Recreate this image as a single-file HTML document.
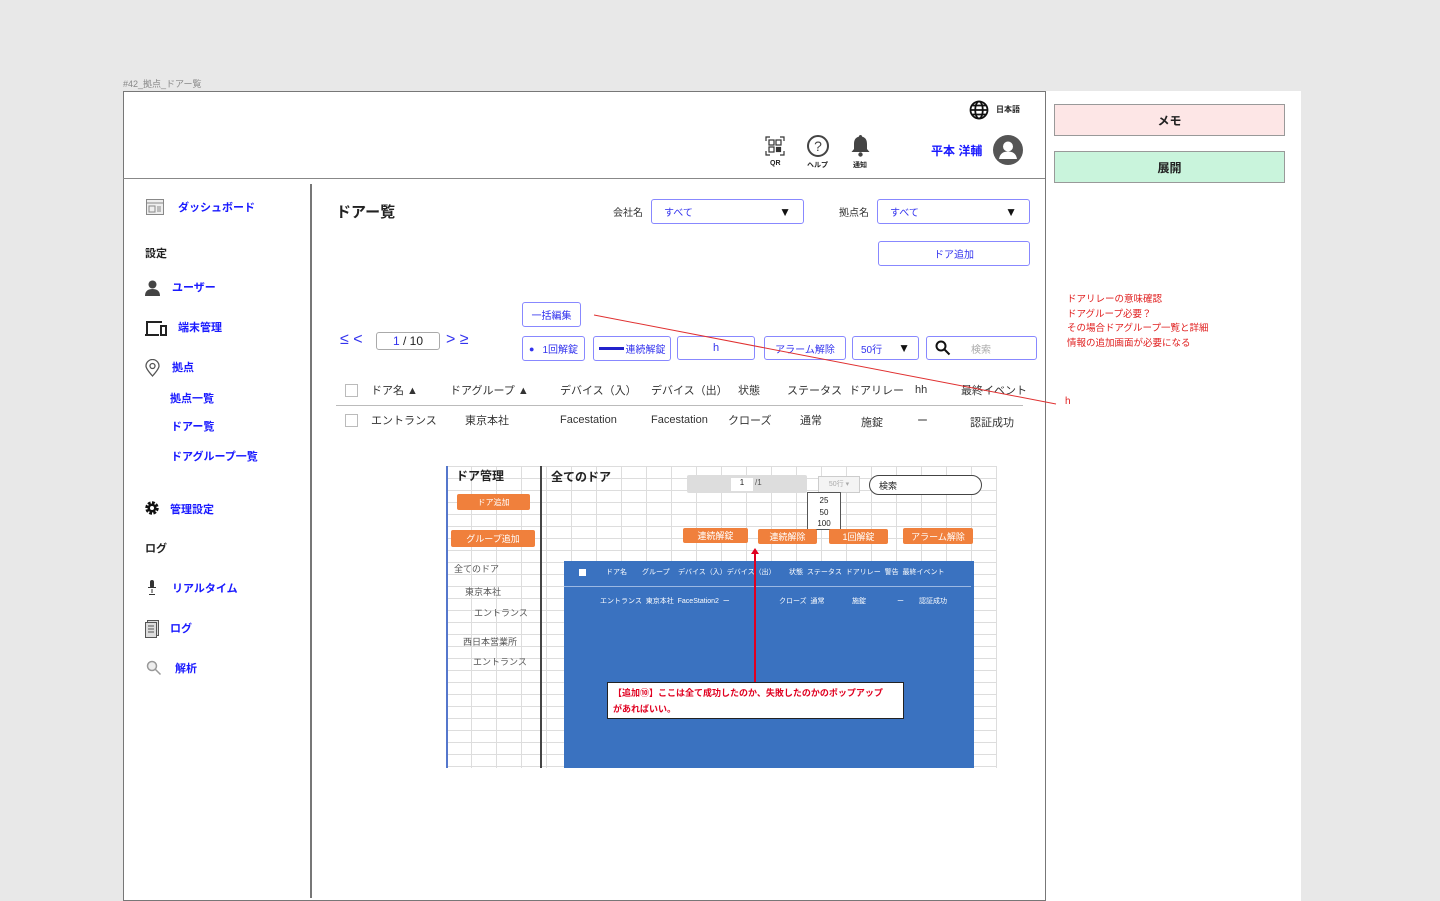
<!DOCTYPE html>
<html><head><meta charset="utf-8">
<style>
*{margin:0;padding:0;box-sizing:border-box}
body{width:1440px;height:898px;background:#e8e8e8;position:relative;overflow:hidden;font-family:"Liberation Sans","Noto Sans CJK JP",sans-serif;color:#222}
.a{position:absolute;white-space:nowrap}
.nav{font-size:11px;font-weight:bold;color:#1a1aff}
.btn{position:absolute;border:1.5px solid #8888ff;border-radius:3px;background:#fff;font-size:11px;color:#3333ee;display:flex;align-items:center;justify-content:center}
.th{position:absolute;top:382px;font-size:11px;color:#333}
.td{position:absolute;top:412px;font-size:11px;color:#333}
.ob{position:absolute;background:#f0803c;color:#fff;font-size:9px;display:flex;align-items:center;justify-content:center;border-radius:2px}
.grid{background-color:#fff;background-image:linear-gradient(#ddd 1px,transparent 1px),linear-gradient(90deg,#ddd 1px,transparent 1px);background-size:25px 12px}
.bt{position:absolute;font-size:7px;color:#fff}
.st{position:absolute;font-size:9px;color:#555}
</style></head><body>
<div class="a" style="left:123px;top:77px;font-size:9px;color:#888">#42_拠点_ドアー覧</div>
<div class="a" style="left:123px;top:91px;width:923px;height:810px;background:#fff;border:1px solid #777"></div>
<div class="a" style="left:1046px;top:91px;width:255px;height:810px;background:#fff"></div>
<div class="a" style="left:123px;top:178px;width:922px;height:1px;background:#888"></div>
<div class="a" style="left:310px;top:184px;width:1.5px;height:714px;background:#777"></div>

<svg class="a" style="left:969px;top:100px" width="20" height="20" viewBox="0 0 20 20" fill="none" stroke="#111" stroke-width="1.8"><circle cx="10" cy="10" r="8.5"/><ellipse cx="10" cy="10" rx="3.8" ry="8.5"/><path d="M1.5 10h17M3 5.5h14M3 14.5h14"/></svg>
<div class="a" style="left:996px;top:104px;font-size:8px;font-weight:bold">日本語</div>
<svg class="a" style="left:765px;top:136px" width="20" height="20" viewBox="0 0 20 20" fill="none" stroke="#333" stroke-width="1.2"><rect x="4" y="4" width="5" height="5"/><rect x="11" y="4" width="5" height="5"/><rect x="4" y="11" width="5" height="5"/><rect x="11.5" y="11.5" width="4" height="4" fill="#333"/><path d="M1 5V1h4M15 1h4v4M1 15v4h4M15 19h4v-4"/></svg>
<div class="a" style="left:770px;top:160px;font-size:7px;font-weight:bold">QR</div>
<svg class="a" style="left:806px;top:134px" width="24" height="24" viewBox="0 0 24 24"><circle cx="12" cy="12" r="10" fill="none" stroke="#444" stroke-width="2"/><text x="12" y="17" font-size="14" text-anchor="middle" fill="#444" font-family="Liberation Sans">?</text></svg>
<div class="a" style="left:807px;top:160px;font-size:7px;font-weight:bold">ヘルプ</div>
<svg class="a" style="left:850px;top:134px" width="21" height="24" viewBox="0 0 21 24"><path d="M10.5 1c-1 0-1.6.7-1.6 1.6C5.5 3.5 4 6 4 10v5l-2.5 3h18L17 15v-5c0-4-1.5-6.5-4.9-7.4 0-.9-.6-1.6-1.6-1.6z" fill="#444"/><circle cx="10.5" cy="20.5" r="2.2" fill="#444"/></svg>
<div class="a" style="left:853px;top:160px;font-size:7px;font-weight:bold">通知</div>
<div class="a" style="left:931px;top:142px;font-size:12px;font-weight:bold;color:#1a1aff">平本 洋輔</div>
<svg class="a" style="left:993px;top:135px" width="30" height="30" viewBox="0 0 30 30"><circle cx="15" cy="15" r="15" fill="#555"/><circle cx="15" cy="11.5" r="5" fill="#fff"/><path d="M6 24c1-6 5-7.5 9-7.5s8 1.5 9 7.5z" fill="#fff"/></svg>

<div class="a" style="left:1054px;top:104px;width:231px;height:32px;background:#fde6e6;border:1px solid #999;font-size:12px;font-weight:bold;display:flex;align-items:center;justify-content:center">メモ</div>
<div class="a" style="left:1054px;top:151px;width:231px;height:32px;background:#c9f4dc;border:1px solid #999;font-size:12px;font-weight:bold;display:flex;align-items:center;justify-content:center">展開</div>
<div class="a" style="left:1067px;top:293px;font-size:9.5px;color:#e02020;line-height:14.5px">ドアリレーの意味確認<br>ドアグループ必要？<br>その場合ドアグループ一覧と詳細<br>情報の追加画面が必要になる</div>
<div class="a" style="left:1065px;top:396px;font-size:10px;color:#e02020">h</div>

<svg class="a" style="left:146px;top:199px" width="18" height="16" viewBox="0 0 18 16" fill="#eee" stroke="#888"><rect x=".5" y=".5" width="17" height="15"/><path d="M.5 4h17M3 7h6v6H3zM11 8h4M11 10h4M11 12h4" fill="none"/></svg>
<div class="a nav" style="left:178px;top:199px">ダッシュボード</div>
<div class="a" style="left:145px;top:245px;font-size:11px;font-weight:bold">設定</div>
<svg class="a" style="left:145px;top:280px" width="15" height="16" viewBox="0 0 15 16" fill="#444"><circle cx="7.5" cy="4.5" r="4"/><path d="M0 16c0-5 3-7 7.5-7s7.5 2 7.5 7z"/></svg>
<div class="a nav" style="left:172px;top:279px">ユーザー</div>
<svg class="a" style="left:145px;top:320px" width="23" height="16" viewBox="0 0 23 16" fill="none" stroke="#222" stroke-width="2"><path d="M2 15V2h15M0 15h14"/><rect x="16" y="6" width="5" height="9"/></svg>
<div class="a nav" style="left:178px;top:319px">端末管理</div>
<svg class="a" style="left:145px;top:359px" width="15" height="18" viewBox="0 0 15 18" fill="none" stroke="#555" stroke-width="1.3"><path d="M7.5 17C3 12 1 9 1 7a6.5 6.5 0 0113 0c0 2-2 5-6.5 10z"/><circle cx="7.5" cy="7" r="2.5"/></svg>
<div class="a nav" style="left:172px;top:359px">拠点</div>
<div class="a nav" style="left:170px;top:390px">拠点一覧</div>
<div class="a nav" style="left:171px;top:418px">ドアー覧</div>
<div class="a nav" style="left:171px;top:448px">ドアグループ一覧</div>
<svg class="a" style="left:144px;top:500px" width="16" height="16" viewBox="0 0 16 16"><circle cx="8" cy="8" r="5" fill="none" stroke="#111" stroke-width="3.5" stroke-dasharray="2.6 1.3"/><circle cx="8" cy="8" r="4.5" fill="#111"/><circle cx="8" cy="8" r="2" fill="#fff"/></svg>
<div class="a nav" style="left:170px;top:501px">管理設定</div>
<div class="a" style="left:145px;top:540px;font-size:11px;font-weight:bold">ログ</div>
<svg class="a" style="left:147px;top:580px" width="10" height="16" viewBox="0 0 10 16" fill="#333"><rect x="3" y="0" width="4" height="8" rx="2"/><path d="M1 7h8v1H1zM4.5 9h1v4h-1zM2 14h6v1H2z"/></svg>
<div class="a nav" style="left:172px;top:580px">リアルタイム</div>
<svg class="a" style="left:145px;top:620px" width="14" height="18" viewBox="0 0 14 18" fill="#ddd" stroke="#555"><rect x="2.5" y=".5" width="11" height="15"/><rect x=".5" y="2.5" width="11" height="15"/><path d="M3 6h6M3 9h6M3 12h6" stroke="#555"/></svg>
<div class="a nav" style="left:170px;top:620px">ログ</div>
<svg class="a" style="left:146px;top:660px" width="16" height="16" viewBox="0 0 16 16" fill="none" stroke="#999" stroke-width="1.5"><circle cx="6" cy="6" r="4.5" fill="#eee"/><path d="M9.5 9.5l5 5"/></svg>
<div class="a nav" style="left:175px;top:660px">解析</div>

<div class="a" style="left:336px;top:201px;font-size:15px;font-weight:bold">ドアー覧</div>
<div class="a" style="left:613px;top:204px;font-size:10px;color:#333">会社名</div>
<div class="btn" style="left:651px;top:199px;width:153px;height:25px;justify-content:space-between;padding:0 12px"><span style="font-size:10px">すべて</span><span style="color:#111;font-size:12px">▼</span></div>
<div class="a" style="left:839px;top:204px;font-size:10px;color:#333">拠点名</div>
<div class="btn" style="left:877px;top:199px;width:153px;height:25px;justify-content:space-between;padding:0 12px"><span style="font-size:10px">すべて</span><span style="color:#111;font-size:12px">▼</span></div>
<div class="btn" style="left:878px;top:241px;width:152px;height:25px;font-size:10px">ドア追加</div>

<div class="btn" style="left:522px;top:302px;width:59px;height:25px;font-size:10px">一括編集</div>
<div class="a" style="left:340px;top:331px;font-size:16px;color:#3333ee">≤ &lt;</div>
<div class="a" style="left:376px;top:332px;width:64px;height:18px;border:1px solid #aaa;border-radius:3px;font-size:12px;text-align:center;line-height:17px"><span style="color:#3333ee">1</span> / 10</div>
<div class="a" style="left:446px;top:331px;font-size:16px;color:#3333ee">&gt; ≥</div>
<div class="btn" style="left:522px;top:336px;width:63px;height:25px;font-size:10px"><span style="font-size:9px;margin-right:8px">●</span>1回解錠</div>
<div class="btn" style="left:593px;top:336px;width:78px;height:25px;font-size:10px"><span style="display:inline-block;width:25px;height:3px;background:#22c;margin-right:2px"></span>連続解錠</div>
<div class="btn" style="left:677px;top:336px;width:78px;height:24px">h</div>
<div class="btn" style="left:764px;top:336px;width:82px;height:24px;font-size:10px">アラーム解除</div>
<div class="btn" style="left:852px;top:336px;width:67px;height:24px;justify-content:space-between;padding:0 8px;font-size:10px"><span>50行</span><span style="color:#111;font-size:12px">▼</span></div>
<div class="btn" style="left:926px;top:336px;width:111px;height:24px;justify-content:flex-start;padding-left:8px"><svg width="16" height="16" viewBox="0 0 16 16" fill="none" stroke="#111" stroke-width="2"><circle cx="6" cy="6" r="4.5"/><path d="M9.5 9.5l5 5"/></svg><span style="color:#aaa;font-size:10px;margin-left:20px">検索</span></div>

<div class="a" style="left:345px;top:384px;width:13px;height:13px;border:1px solid #bbb"></div>
<div class="th" style="left:371px">ドア名 ▲</div>
<div class="th" style="left:450px">ドアグループ ▲</div>
<div class="th" style="left:560px">デバイス（入）</div>
<div class="th" style="left:651px">デバイス（出）</div>
<div class="th" style="left:738px">状態</div>
<div class="th" style="left:787px">ステータス</div>
<div class="th" style="left:849px">ドアリレー</div>
<div class="th" style="left:915px;top:384px">hh</div>
<div class="th" style="left:961px">最終イベント</div>
<div class="a" style="left:336px;top:405px;width:687px;height:1px;background:#bbb"></div>
<div class="a" style="left:345px;top:414px;width:13px;height:13px;border:1px solid #bbb"></div>
<div class="td" style="left:371px">エントランス</div>
<div class="td" style="left:465px">東京本社</div>
<div class="td" style="left:560px;top:414px">Facestation</div>
<div class="td" style="left:651px;top:414px">Facestation</div>
<div class="td" style="left:728px">クローズ</div>
<div class="td" style="left:800px">通常</div>
<div class="td" style="left:861px;top:414px">施錠</div>
<div class="td" style="left:917px">ー</div>
<div class="td" style="left:970px;top:414px">認証成功</div>

<div class="a grid" style="left:446px;top:466px;width:551px;height:302px"></div>
<div class="a" style="left:446px;top:466px;width:1.5px;height:302px;background:#5577cc"></div>
<div class="a" style="left:540px;top:466px;width:2px;height:302px;background:#444"></div>
<div class="a" style="left:456px;top:467px;font-size:12px;font-weight:bold">ドア管理</div>
<div class="a" style="left:551px;top:468px;font-size:12px;font-weight:bold">全てのドア</div>
<div class="ob" style="left:457px;top:494px;width:73px;height:16px;font-size:8px">ドア追加</div>
<div class="ob" style="left:451px;top:530px;width:84px;height:17px;font-size:9px">グループ追加</div>
<div class="st" style="left:454px;top:562px">全てのドア</div>
<div class="st" style="left:465px;top:585px">東京本社</div>
<div class="st" style="left:474px;top:606px">エントランス</div>
<div class="st" style="left:463px;top:635px">西日本営業所</div>
<div class="st" style="left:473px;top:655px">エントランス</div>
<div class="a" style="left:687px;top:475px;width:120px;height:18px;background:#ddd;border-radius:2px"></div>
<div class="a" style="left:731px;top:478px;width:22px;height:13px;background:#fff;font-size:8px;text-align:center">1</div>
<div class="a" style="left:755px;top:478px;font-size:8px;color:#555">/1</div>
<div class="a" style="left:818px;top:476px;width:42px;height:17px;border:1px solid #ccc;background:#f4f4f4;font-size:7px;color:#aaa;text-align:center;line-height:16px">50行 ▾</div>
<div class="a" style="left:807px;top:492px;width:34px;height:38px;background:#fff;border:1px solid #555;font-size:8px;text-align:center;line-height:11.5px;padding-top:2px">25<br>50<br>100</div>
<div class="a" style="left:869px;top:475px;width:113px;height:20px;border:1.5px solid #444;border-radius:10px;background:#fff;font-size:9px;padding:3px 0 0 9px">検索</div>
<div class="ob" style="left:683px;top:528px;width:65px;height:15px">連続解錠</div>
<div class="ob" style="left:758px;top:529px;width:59px;height:15px">連続解除</div>
<div class="ob" style="left:829px;top:529px;width:59px;height:15px">1回解錠</div>
<div class="ob" style="left:903px;top:528px;width:70px;height:16px">アラーム解除</div>
<div class="a" style="left:564px;top:561px;width:410px;height:207px;background:#3a72c0"></div>
<div class="a" style="left:564px;top:586px;width:407px;height:1px;background:#9bb8e3"></div>
<div class="a" style="left:579px;top:569px;width:7px;height:7px;background:#fff"></div>
<div class="bt" style="left:606px;top:567px">ドア名</div>
<div class="bt" style="left:642px;top:567px">グループ</div>
<div class="bt" style="left:678px;top:567px">デバイス（入）デバイス（出）</div>
<div class="bt" style="left:789px;top:567px">状態 &nbsp;ステータス &nbsp;ドアリレー &nbsp;警告 &nbsp;最終イベント</div>
<div class="bt" style="left:600px;top:596px">エントランス &nbsp;東京本社 &nbsp;FaceStation2 &nbsp;ー</div>
<div class="bt" style="left:779px;top:596px">クローズ &nbsp;通常</div>
<div class="bt" style="left:852px;top:596px">施錠</div>
<div class="bt" style="left:897px;top:596px">ー</div>
<div class="bt" style="left:919px;top:596px">認証成功</div>
<div class="a" style="left:754px;top:553px;width:2px;height:130px;background:#e00020"></div>
<div class="a" style="left:751px;top:548px;width:0;height:0;border-left:4px solid transparent;border-right:4px solid transparent;border-bottom:6px solid #e00020"></div>
<div class="a" style="left:607px;top:682px;width:297px;height:37px;background:#fff;border:1.5px solid #222;font-size:9px;font-weight:bold;color:#e00020;padding:2px 14px 2px 5px;line-height:16px;white-space:normal">【追加⑩】ここは全て成功したのか、失敗したのかのポップアップがあればいい。</div>

<svg class="a" style="left:0;top:0" width="1440" height="898"><line x1="594" y1="315" x2="1056" y2="404" stroke="#e03030" stroke-width="1"/></svg>
</body></html>
